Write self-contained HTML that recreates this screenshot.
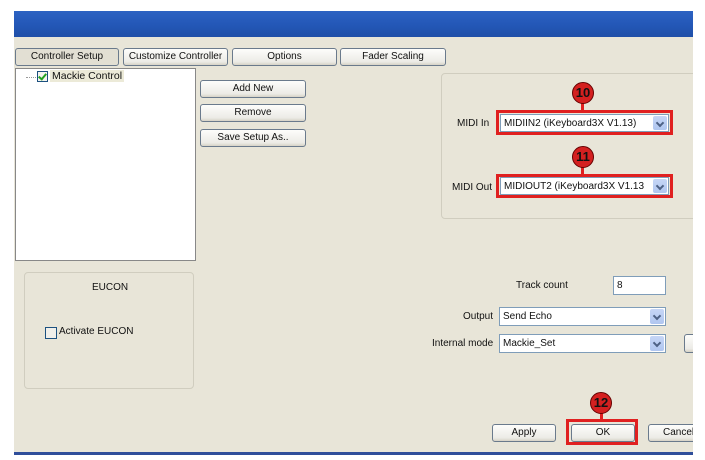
<!DOCTYPE html>
<html><head><meta charset="utf-8"><style>
*{box-sizing:border-box;margin:0;padding:0}
body{width:705px;height:460px;background:#fff;position:relative;overflow:hidden;font-family:"Liberation Sans",sans-serif;font-size:10px;color:#111}
.a{position:absolute;font-size:10px}
.btn{position:absolute;border:1px solid #6a7a8c;border-radius:3px;background:linear-gradient(#fdfdfb,#ecebe6 80%,#d6d2c6);text-align:center;font-size:10px;line-height:16px;color:#111}
.combo{position:absolute;background:#fff;border:1px solid #7f9db9;font-size:10px;line-height:17px;padding-left:3px;white-space:nowrap;overflow:hidden}
.combo i{position:absolute;right:1px;top:1px;width:14px;bottom:1px;background:linear-gradient(#c6d6f6,#b0c6f0);border-radius:2px}
.combo i:after{content:"";position:absolute;left:4px;top:4px;width:4px;height:4px;border-right:2px solid #4d6185;border-bottom:2px solid #4d6185;transform:rotate(45deg)}
.red{position:absolute;border:3px solid #e02020}
.cir{position:absolute;width:22px;height:22px;border-radius:50%;background:#d42020;border:1px solid #600;color:#111;font-weight:bold;font-size:13px;text-align:center;line-height:20px}
.stem{position:absolute;width:3px;background:#e02020}
.grp{position:absolute;border:1px solid #d0cdbf;border-radius:4px}
</style></head><body>
<div class="a" style="left:14px;top:11px;width:679px;height:26px;background:linear-gradient(#2d62c2,#2458b8 50%,#1f4fa8)"></div>
<div class="a" style="left:14px;top:37px;width:679px;height:415px;background:#e8e5d8"></div>
<div class="a" style="left:14px;top:452px;width:679px;height:3px;background:#2f4e9a"></div>

<div class="btn" style="left:15px;top:48px;width:104px;height:18px;background:#e2dfd3">Controller Setup</div>
<div class="btn" style="left:123px;top:48px;width:105px;height:18px">Customize Controller</div>
<div class="btn" style="left:232px;top:48px;width:105px;height:18px">Options</div>
<div class="btn" style="left:340px;top:48px;width:106px;height:18px">Fader Scaling</div>

<div class="a" style="left:15px;top:68px;width:181px;height:193px;background:#fff;border:1px solid #888"></div>
<div class="a" style="left:26px;top:77px;width:10px;border-top:1px dotted #999"></div>
<div class="a" style="left:37px;top:71px;width:11px;height:11px;border:1px solid #1c5180;background:#f4f4f0"></div>
<div class="a" style="left:40px;top:72px;width:5px;height:8px;border-right:2px solid #21a121;border-bottom:2px solid #21a121;transform:rotate(40deg)"></div>
<div class="a" style="left:50px;top:70px;font-size:10.5px;background:#ecead8;padding:0 2px">Mackie Control</div>

<div class="btn" style="left:200px;top:80px;width:106px;height:18px">Add New</div>
<div class="btn" style="left:200px;top:104px;width:106px;height:18px">Remove</div>
<div class="btn" style="left:200px;top:129px;width:106px;height:18px">Save Setup As..</div>

<div class="grp" style="left:441px;top:73px;width:270px;height:146px"></div>
<div class="a" style="left:457px;top:118px">MIDI In</div>
<div class="combo" style="left:500px;top:114px;width:169px;height:18px">MIDIIN2 (iKeyboard3X V1.13)<i></i></div>
<div class="red" style="left:496px;top:110px;width:177px;height:25px"></div>
<div class="stem" style="left:581px;top:100px;height:11px"></div>
<div class="cir" style="left:572px;top:82px">10</div>
<div class="a" style="left:452px;top:182px">MIDI Out</div>
<div class="combo" style="left:500px;top:177px;width:169px;height:18px">MIDIOUT2 (iKeyboard3X V1.13<i></i></div>
<div class="red" style="left:496px;top:174px;width:177px;height:24px"></div>
<div class="stem" style="left:581px;top:164px;height:11px"></div>
<div class="cir" style="left:572px;top:146px">11</div>

<div class="grp" style="left:24px;top:272px;width:170px;height:117px"></div>
<div class="a" style="left:92px;top:282px">EUCON</div>
<div class="a" style="left:45px;top:327px;width:12px;height:12px;border:1px solid #1c5180;background:#f0efea"></div>
<div class="a" style="left:59px;top:326px">Activate EUCON</div>

<div class="a" style="left:516px;top:280px">Track count</div>
<div class="combo" style="left:613px;top:276px;width:53px;height:19px">8</div>
<div class="a" style="left:463px;top:311px">Output</div>
<div class="combo" style="left:499px;top:307px;width:167px;height:19px">Send Echo<i></i></div>
<div class="a" style="left:432px;top:338px">Internal mode</div>
<div class="combo" style="left:499px;top:334px;width:167px;height:19px">Mackie_Set<i></i></div>
<div class="btn" style="left:684px;top:334px;width:20px;height:19px"></div>

<div class="btn" style="left:492px;top:424px;width:64px;height:18px">Apply</div>
<div class="btn" style="left:571px;top:424px;width:64px;height:18px">OK</div>
<div class="red" style="left:566px;top:419px;width:72px;height:26px"></div>
<div class="stem" style="left:600px;top:410px;height:10px"></div>
<div class="cir" style="left:590px;top:392px">12</div>
<div class="btn" style="left:648px;top:424px;width:60px;height:18px;text-align:left;padding-left:14px">Cancel</div>
<div class="a" style="left:693px;top:37px;width:12px;height:423px;background:#fff"></div>
</body></html>
